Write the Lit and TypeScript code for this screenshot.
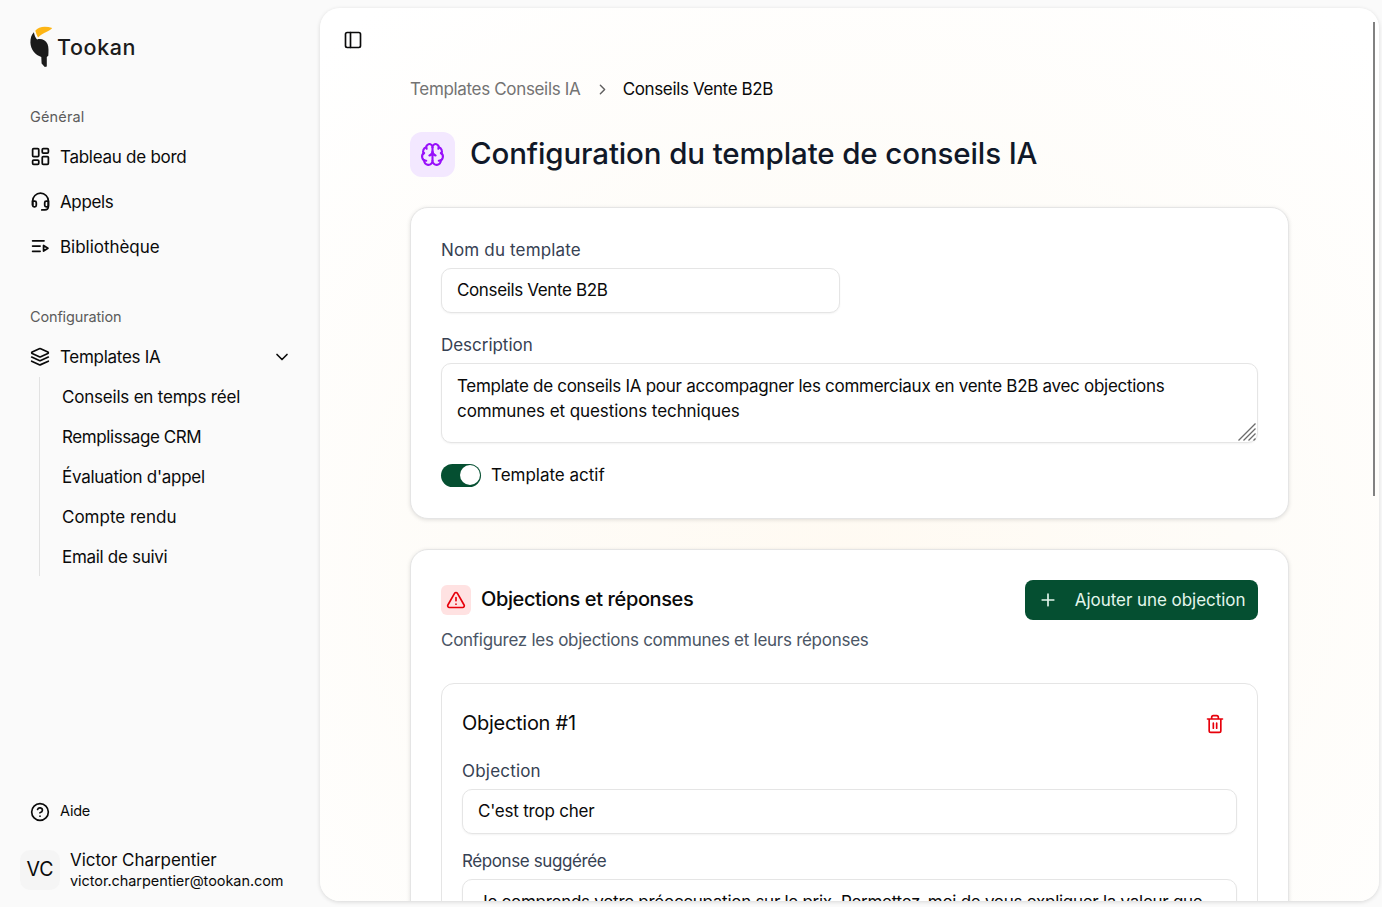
import { LitElement, html, svg, css, TemplateResult } from "lit";
import { customElement, property } from "lit/decorators.js";

const ICONS: Record<string, TemplateResult> = {
  dashboard: svg`<rect x="3" y="3" width="7" height="9" rx="1.2"/><rect x="14" y="3" width="7" height="5" rx="1.2"/><rect x="14" y="12" width="7" height="9" rx="1.2"/><rect x="3" y="16" width="7" height="5" rx="1.2"/>`,
  headset: svg`<path d="M3 16v-4.500a9 9 0 0 1 18 0V18a4 4 0 0 1-4 3.600h-3.500"/><path d="M3 11.500h2.400a1.800 1.800 0 0 1 1.800 1.800v2.900a1.800 1.800 0 0 1-1.800 1.800h-.6A1.800 1.800 0 0 1 3 16.200zM21 11.500h-2.400a1.800 1.800 0 0 0-1.800 1.800v2.900a1.800 1.800 0 0 0 1.800 1.800h.6A1.800 1.800 0 0 0 21 16.200z"/>`,
  library: svg`<path d="M3 5.500h13M3 11.500h8.500M3 17.500h8.500M15.500 10.800v6.400l5-3.200z"/>`,
  layers: svg`<path d="m12.830 2.180a2 2 0 0 0-1.660 0L2.600 6.080a1 1 0 0 0 0 1.830l8.580 3.910a2 2 0 0 0 1.660 0l8.580-3.900a1 1 0 0 0 0-1.830Z"/><path d="m22 12-9.170 4.160a2 2 0 0 1-1.660 0L2 12"/><path d="m22 17-9.170 4.160a2 2 0 0 1-1.660 0L2 17"/>`,
  down: svg`<path d="m6 9 6 6 6-6"/>`,
  right: svg`<path d="m9 18 6-6-6-6"/>`,
  help: svg`<circle cx="12" cy="12" r="10"/><path d="M9.090 9a3 3 0 0 1 5.830 1c0 2-3 3-3 3M12 17h.01"/>`,
  panel: svg`<rect x="3" y="3" width="18" height="18" rx="2"/><path d="M9 3v18"/>`,
  brain: svg`<path d="M12 18V5"/><path d="M15 13a4.170 4.170 0 0 1-3-4 4.170 4.170 0 0 1-3 4"/><path d="M17.598 6.500A3 3 0 1 0 12 5a3 3 0 1 0-5.598 1.500"/><path d="M17.997 5.125a4 4 0 0 1 2.526 5.770"/><path d="M18 18a4 4 0 0 0 2-7.464"/><path d="M19.967 17.483A4 4 0 1 1 12 18a4 4 0 1 1-7.967-.517"/><path d="M6 18a4 4 0 0 1-2-7.464"/><path d="M6.003 5.125a4 4 0 0 0-2.526 5.770"/>`,
  alert: svg`<path d="m21.730 18-8-14a2 2 0 0 0-3.480 0l-8 14A2 2 0 0 0 4 21h16a2 2 0 0 0 1.730-3M12 9v4M12 17h.01"/>`,
  plus: svg`<path d="M5 12h14M12 5v14"/>`,
  trash: svg`<path d="M3 6h18M19 6v14a2 2 0 0 1-2 2H7a2 2 0 0 1-2-2V6M8 6V4a2 2 0 0 1 2-2h4a2 2 0 0 1 2 2v2M10 11v6M14 11v6"/>`,
};

@customElement("ui-icon")
class UiIcon extends LitElement {
  @property() name = "";
  @property({ type: Number }) size = 20;
  static styles = css`
    :host { display: inline-flex; flex: none; }
    .glyph { display: block; fill: none; stroke: currentColor; stroke-width: 2; stroke-linecap: round; stroke-linejoin: round; }
  `;
  render() {
    return html`<svg class="glyph" width=${this.size} height=${this.size} viewBox="0 0 24 24">${ICONS[this.name]}</svg>`;
  }
}

/* Text with its own tracking, in px. */
const t = (text: string, tracking = 0) =>
  html`<span style="letter-spacing:${tracking}px;margin-right:${-tracking}px">${text}</span>`;

const MAIN_NAV: [string, string, number, number][] = [
  ["dashboard", "Tableau de bord", -0.27, 21],
  ["headset", "Appels", -0.37, 21],
  ["library", "Bibliothèque", -0.03, 21],
];
const SUB_NAV: [string, number][] = [
  ["Conseils en temps réel", -0.21],
  ["Remplissage CRM", -0.41],
  ["Évaluation d'appel", -0.26],
  ["Compte rendu", 0],
  ["Email de suivi", -0.3],
];

@customElement("app-root")
class AppRoot extends LitElement {
  static styles = css`
    * { box-sizing: border-box; }
    :host {
      display: flex; height: 907px; overflow: hidden; background: #fafafa; color: #0a0a0a;
      font: 400 17px/24px Inter, "Liberation Sans", sans-serif; white-space: nowrap;
    }
    .sidebar { width: 320px; flex: none; display: flex; flex-direction: column; padding: 26px 20px 17px; }
    .brand { display: flex; height: 42px; margin-left: 10px; gap: 4px; font-size: 21.5px; font-weight: 500; line-height: 42px; color: #1c1c1c; }
    .bird { display: block; width: 23px; height: 42px; flex: none; }
    .caption { height: 20px; margin: 39px 0 0 10px; font-size: 14.5px; line-height: 20px; color: #5c5c5c; }
    .second { margin-top: 38px; }
    .nav { display: flex; flex-direction: column; margin-top: 7px; }
    .item { display: flex; align-items: center; height: 45px; padding-left: 10px; gap: 10px; }
    .slot { display: flex; width: 20px; height: 24px; align-items: center; justify-content: center; flex: none; }
    .grow { flex: 1; }
    .tree { height: 40px; margin-top: 10px; padding-right: 8px; }
    .branch { margin-left: 19px; border-left: 1px solid #e2e2e2; padding-left: 22px; height: 199px; }
    .leaf { height: 40px; line-height: 40px; }
    .spacer { flex: 1; }
    .help { font-size: 14.5px; height: 40px; margin-bottom: 17px; line-height: 22px; }
    .help > span { margin-top: -2px; }
    .user { display: flex; height: 41px; gap: 10px; align-items: center; }
    .avatar { width: 40px; height: 40px; border-radius: 10px; background: #f5f5f5; text-align: center; font-size: 19.5px; line-height: 39px; }
    .who { display: flex; flex-direction: column; line-height: 21px; padding-top: 1px; }
    .mail { font-size: 14.5px; line-height: 20px; }

    .frame { border-radius: 20px; height: 893px; margin-top: 8px; box-shadow: 0 1px 4px rgba(0, 0, 0, .14); flex: none; width: 1059px; }
    .panel {
      position: relative; width: 1059px; height: 893px; overflow: hidden; border-radius: 20px; padding: 22px 90px 0;
      background: radial-gradient(ellipse 780px 700px at 50% 62%, #fffaf2 0%, #fefcf8 50%, #ffffff 100%);
    }
    .toggle-row { margin-left: -67px; height: 20px; display: flex; }
    .crumbs { display: flex; align-items: center; height: 24px; margin-top: 27px; }
    .muted { color: #737373; }
    .sep { margin: 0 12px 0 13px; color: #5f5f5f; }
    .heading { display: flex; align-items: center; gap: 15px; height: 45px; margin-top: 31px; }
    .badge { width: 45px; height: 45px; border-radius: 12px; background: #f3e8ff; color: #9810fa; display: flex; align-items: center; justify-content: center; }
    .title { font-size: 29.5px; font-weight: 500; line-height: 40px; color: #101828; margin: -3px 0 0; }
    .card { width: 879px; background: #fff; border: 1px solid #e5e5e5; border-radius: 18px; padding: 30px; margin-top: 30px; box-shadow: 0 1px 4px rgba(0, 0, 0, .12); }
    .first { height: 312px; }
    .label { color: #364153; height: 24px; }
    .field { height: 45px; margin: 6px 0 20px; padding: 0 15px; border: 1px solid #e5e5e5; border-radius: 10px; line-height: 42px; box-shadow: 0 1px 2px rgba(0, 0, 0, .05); background: #fff; }
    .half { width: 399px; }
    .tight { margin-bottom: 15px; }
    .area { position: relative; height: 80px; line-height: 25px; padding-top: 10px; }
    .grip { position: absolute; right: 1px; bottom: 1px; display: block; }
    .switch-row { display: flex; height: 24px; align-items: center; gap: 10px; }
    .switch { width: 40px; height: 23px; border-radius: 12px; background: #054f31; padding: 1.5px 1px; display: flex; justify-content: flex-end; }
    .thumb { width: 20px; height: 20px; border-radius: 50%; background: #fff; }
    .head { display: flex; height: 40px; align-items: center; }
    .warn { width: 30px; height: 30px; border-radius: 6px; background: #ffe2e2; color: #e7000b; display: flex; align-items: center; justify-content: center; margin-right: 10px; }
    .h2 { font-size: 20px; font-weight: 500; margin: -2px 0 0; flex: 1; }
    .h3 { font-size: 20px; font-weight: 400; margin: -2px 0 0; flex: 1; }
    .button { width: 233px; height: 40px; border-radius: 8px; background: #054f31; color: #e3f6ec; display: flex; align-items: center; padding: 0 12.5px; justify-content: space-between; }
    .sub { color: #4a5565; height: 24px; margin-top: 8px; }
    .objection { margin-top: 31px; border: 1px solid #e5e5e5; border-radius: 13px; padding: 20px 20px 0; height: 420px; }
    .delete { color: #e7000b; margin-right: 12px; }
    .gap { margin-top: 15px; }
    .scroll { position: absolute; right: 4px; top: 14px; width: 2px; height: 474px; background: #818181; }
  `;

  render() {
    return html`
      <aside class="sidebar">
        <div class="brand">
          <svg class="bird" viewBox="0 0 23 42">
            <path fill="#fdb515" d="M5.300 4.800C8.500 .2 16 .1 22.200 2 20.500 4.700 13 6.800 8 11.400 6.900 9.300 6 7.200 5.300 4.800Z"/>
            <path fill="#1b1b1b" d="M3.900 6.300C4.400 9.200 5.300 11.600 7.100 13.600 10.500 12.300 15.500 13.600 17.500 18 18.800 21.200 18.600 25.500 18.300 29.800L16.800 31V40.600L14.800 41 11.600 37.500 11.300 31C5.500 29 .6 23.500 .4 16.500 .3 12.500 1.600 8.300 3.900 6.300Z"/>
          </svg>
          ${t("Tookan", 0.6)}
        </div>
        <div class="caption">${t("Général", 0.15)}</div>
        <nav class="nav">
          ${MAIN_NAV.map(([icon, label, ls, size]) => html`
            <div class="item"><span class="slot"><ui-icon name=${icon} size=${size}></ui-icon></span>${t(label, ls)}</div>`)}
        </nav>
        <div class="caption second">${t("Configuration", -0.15)}</div>
        <div class="item tree">
          <ui-icon name="layers"></ui-icon><span class="grow">${t("Templates IA", -0.29)}</span><ui-icon name="down" size="20"></ui-icon>
        </div>
        <div class="branch">${SUB_NAV.map(([label, ls]) => html`<div class="leaf">${t(label, ls)}</div>`)}</div>
        <div class="spacer"></div>
        <div class="item help"><ui-icon name="help"></ui-icon>${t("Aide", -0.2)}</div>
        <div class="user">
          <div class="avatar">${t("VC")}</div>
          <div class="who">${t("Victor Charpentier", -0.04)}<span class="mail">${t("victor.charpentier@tookan.com", -0.06)}</span></div>
        </div>
      </aside>
      <div class="frame">
        <main class="panel">
          <div class="toggle-row"><ui-icon name="panel"></ui-icon></div>
          <div class="crumbs">
            <span class="muted">${t("Templates Conseils IA", -0.335)}</span>
            <ui-icon class="sep" name="right" size="17"></ui-icon>
            ${t("Conseils Vente B2B", -0.37)}
          </div>
          <div class="heading">
            <div class="badge"><ui-icon name="brain" size="25"></ui-icon></div>
            <h1 class="title">${t("Configuration du template de conseils IA", -0.12)}</h1>
          </div>
          <section class="card first">
            <div class="label">${t("Nom du template", 0.16)}</div>
            <div class="field half">${t("Conseils Vente B2B", -0.37)}</div>
            <div class="label">${t("Description", -0.03)}</div>
            <div class="field area">
              ${t("Template de conseils IA pour accompagner les commerciaux en vente B2B avec objections", -0.286)}<br>
              ${t("communes et questions techniques", -0.084)}
              <svg class="grip" width="18" height="18" fill="none" stroke="#6b6b6b" stroke-width="1.300"><path d="M.5 17.500 17.500 .5M5.500 17.500l12-12M10.500 17.500l7-7M15.500 17.500l2-2"/></svg>
            </div>
            <div class="switch-row"><div class="switch"><div class="thumb"></div></div>${t("Template actif", -0.01)}</div>
          </section>
          <section class="card">
            <div class="head">
              <div class="warn"><ui-icon name="alert"></ui-icon></div>
              <h2 class="h2">${t("Objections et réponses", -0.385)}</h2>
              <div class="button"><ui-icon name="plus"></ui-icon>${t("Ajouter une objection", -0.046)}</div>
            </div>
            <div class="sub">${t("Configurez les objections communes et leurs réponses", -0.275)}</div>
            <div class="objection">
              <div class="head"><h3 class="h3">${t("Objection #1", -0.28)}</h3><ui-icon class="delete" name="trash"></ui-icon></div>
              <div class="label gap">${t("Objection", 0.2)}</div>
              <div class="field tight">${t("C'est trop cher", -0.21)}</div>
              <div class="label">${t("Réponse suggérée", -0.4)}</div>
              <div class="field area">${t("Je comprends votre préoccupation sur le prix. Permettez-moi de vous expliquer la valeur que", -0.277)}</div>
            </div>
          </section>
          <div class="scroll"></div>
        </main>
      </div>
    `;
  }
}
